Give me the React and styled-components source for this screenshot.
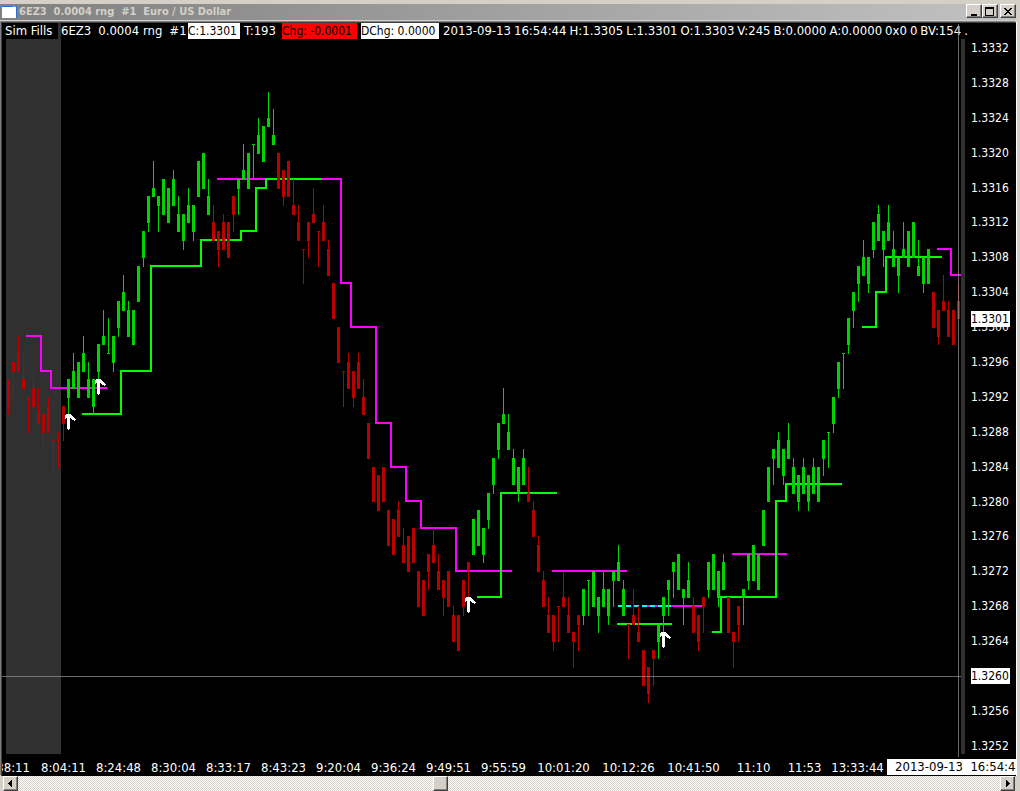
import React from "react";
import styled, { createGlobalStyle } from "styled-components";

const Global = createGlobalStyle`
  *, *::before, *::after { box-sizing: border-box; }
  body {
    margin: 0;
    background: #d4d0c8;
    font-family: "DejaVu Sans Condensed", "DejaVu Sans", Tahoma, sans-serif;
  }
`;

const Window = styled.main`
  display: flex;
  flex-direction: column;
  height: 100vh;
  min-height: 400px;
  padding: 4px 4px 0 0;
  overflow: hidden;
  background: #d4d0c8;
`;

const TitleBar = styled.header`
  flex: none;
  display: flex;
  align-items: center;
  height: 16px;
  padding: 0 0 0 2px;
  background: linear-gradient(90deg, #808080, #c2c2c2);
`;

const WindowIcon = styled.svg`
  width: 15px;
  height: 12px;
  margin-right: 2px;
`;

const Title = styled.h1`
  flex: 1;
  margin: 0;
  color: #d4d0c8;
  font-size: 11px;
  font-weight: 700;
  line-height: 14px;
  white-space: pre;
`;

const BevelButton = styled.button`
  flex: none;
  display: grid;
  place-items: center;
  width: ${(p) => p.$width || 16}px;
  height: 14px;
  margin: 0 0 ${(p) => (p.$title ? 2 : 0)}px ${(p) => p.$gap || 0}px;
  padding: 0;
  border: 1px solid;
  border-color: #fff #404040 #404040 #fff;
  box-shadow: inset -1px -1px 0 #808080;
  background: #d4d0c8;
`;

const ChartFrame = styled.section`
  position: relative;
  flex: 1;
  min-height: 0;
  display: grid;
  grid-template-rows: 16px minmax(0, 1fr) 19px;
  margin: 2px 0 0 1px;
  border: solid #404040;
  border-width: 1px 0 0 1px;
  box-shadow: -1px -1px 0 #808080, 1px 0 0 #fff;
  background: #000;
  overflow: hidden;
`;

const InfoBar = styled.div`
  display: flex;
  color: #fff;
  font-size: 13px;
  line-height: 16px;
  white-space: pre;
  overflow: hidden;
`;

const SimFills = styled.span`
  flex: none;
  width: 59px;
  padding-left: 3px;
  border-right: 3px solid #303030;
`;

const Field = styled.span`
  flex: none;
  width: ${(p) => p.$width}px;
  margin-right: 4px;
`;

const BoxedField = styled(Field)`
  background: ${(p) => p.$bg};
  color: #000;
  font-size: 12px;
`;

const Symbol = styled(Field)`
  display: flex;
  gap: 7px;
`;

const Quote = styled.span`
  display: flex;
  gap: 3px;
`;

const PlotRow = styled.div`
  display: flex;
  min-height: 0;
`;

const Plot = styled.svg`
  display: block;
  flex: 1;
  min-width: 0;
  height: 100%;
`;

const Rail = styled.div`
  flex: none;
  width: 4px;
  margin-bottom: 3px;
  background: #303030;
`;

const PriceAxis = styled.div`
  flex: none;
  position: relative;
  display: flex;
  flex-direction: column;
  justify-content: space-between;
  width: 51px;
  padding: 1px 0 3px 6px;
  color: #fff;
  font-size: 12px;
  line-height: 16px;
`;

const PriceTag = styled.strong`
  position: absolute;
  left: 6px;
  top: ${(p) => p.$at}%;
  width: 39px;
  background: #fff;
  color: #000;
  font-weight: 400;
`;

const TimeAxis = styled.div`
  display: grid;
  grid-template-columns: 34fr repeat(9, 55fr) repeat(3, 65fr) 55fr 47fr 59fr 129fr;
  color: #fff;
  font-size: 13px;
  line-height: 16px;
  white-space: pre;
`;

const TimeLabel = styled.span`
  display: flex;
  justify-content: center;
  min-width: 0;
  padding-top: 3px;
  overflow: hidden;
`;

const FirstTime = styled(TimeLabel)`
  justify-content: flex-end;
  padding-right: 6px;
`;

const CurrentTime = styled(TimeLabel)`
  justify-content: flex-start;
  height: 16px;
  margin-top: 2px;
  padding: 0 0 0 8px;
  background: #fff;
  color: #000;
`;

const CrosshairV = styled.i`
  position: absolute;
  right: 57px;
  top: 1px;
  bottom: 19px;
  width: 1px;
  background: rgba(150, 150, 150, 0.7);
`;

const Scrollbar = styled.div`
  flex: none;
  display: flex;
  height: 15px;
  margin-left: 2px;
  padding-right: 1px;
  border-left: 1px solid #d4d0c8;
`;

const Track = styled.div`
  flex: 1;
  display: flex;
  background: repeating-conic-gradient(#fff 0 25%, #d4d0c8 0 50%) 0 0 / 2px 2px;
`;

const Thumb = styled.div`
  width: 15px;
  height: 15px;
  margin-left: 42.3%;
  border: 1px solid;
  border-color: #fff #404040 #404040 #fff;
  box-shadow: inset -1px -1px 0 #808080;
  background: #d4d0c8;
`;

const ArrowButton = styled(BevelButton)`
  height: 15px;
`;

// Each bar spans four ticks: [high, body top offset, body bottom offset].
const RUNS = [
  ["r", [3294,0,3],[3296,0,1],[3299,2,4],[3297,3,4],[3292,0,0],[3295,2,4],[3293,3,4],[3290,0,2],[3292,1,4],[3287,0,0],[3288,0,0],[3291,0,2]],
  ["g", [3294,0,2],[3297,2,4],[3296,0,4],[3299,2,4],[3296,2,4],[3294,0,3],[3298,0,3],[3302,3,4],[3301,4,4],[3299,0,3],[3303,0,3],[3306,2,4],[3303,1,4],[3302,0,4],[3307,0,4],[3311,0,3],[3315,0,3],[3319,3,4],[3315,0,1],[3317,0,4],[3316,0,4],[3318,1,4],[3315,2,4],[3313,0,3],[3316,2,4],[3314,0,3],[3319,0,4],[3320,0,4],[3317,2,4]],
  ["r", [3314,2,4],[3311,0,2],[3313,1,4],[3312,0,4],[3315,0,2]],
  ["g", [3317,0,1],[3321,3,4],[3320,0,4],[3321,0,0],[3324,2,4],[3323,0,4],[3327,3,4],[3325,3,4]],
  ["r", [3320,0,4],[3318,0,3],[3319,0,4],[3317,3,4],[3314,2,4],[3309,0,0],[3312,0,2],[3316,3,4],[3311,0,0],[3314,2,4],[3310,1,4],[3305,0,4],[3300,0,4],[3295,0,0],[3297,1,4],[3295,0,3],[3297,1,4],[3294,2,4],[3289,0,4],[3284,0,4],[3283,0,4],[3284,0,4],[3279,0,4],[3278,0,4],[3280,1,4],[3277,2,4],[3276,0,4],[3277,0,4],[3272,0,4],[3271,0,4],[3274,0,2],[3277,2,4],[3274,2,4],[3271,0,2],[3272,0,4],[3268,1,4],[3267,0,4],[3271,0,3],[3273,0,1]],
  ["g", [3278,0,4],[3279,0,4],[3277,0,3],[3281,0,3],[3285,0,3],[3289,0,3],[3293,3,4],[3290,2,4],[3286,1,4],[3284,0,3],[3286,1,4]],
  ["r", [3284,3,4],[3280,1,4],[3276,1,4],[3272,1,4],[3269,2,4],[3267,0,3],[3268,0,0],[3272,3,4],[3269,2,4],[3265,0,1],[3267,0,1]],
  ["g", [3270,0,3],[3271,0,0],[3272,0,4],[3269,0,2],[3272,2,4],[3270,0,3],[3272,0,1],[3275,2,4],[3271,1,4]],
  ["r", [3266,0,0],[3270,3,4],[3268,3,4],[3263,0,4],[3261,0,3],[3263,0,1]],
  ["g", [3266,0,2],[3269,0,2],[3271,0,1],[3273,0,1],[3274,0,4],[3270,0,1],[3273,2,4]],
  ["r", [3269,1,4],[3267,0,3],[3269,0,1]],
  ["g", [3273,0,3],[3274,0,4],[3272,0,3],[3274,1,4]],
  ["r", [3269,0,4],[3265,0,1],[3268,0,2]],
  ["g", [3270,0,1],[3274,0,3],[3275,0,4],[3274,0,4],[3279,0,4],[3284,0,4],[3286,0,1],[3288,1,4],[3286,0,3],[3289,2,4],[3285,1,4],[3283,0,3],[3285,1,4],[3283,0,3],[3285,1,4],[3284,0,4],[3287,0,2],[3288,0,0],[3292,0,3],[3296,0,3],[3297,0,0],[3301,0,3],[3304,0,2],[3307,0,2],[3310,2,4],[3308,0,3],[3312,0,3],[3314,1,4],[3311,0,2],[3314,2,4],[3311,2,4],[3308,0,2],[3312,3,4],[3311,0,4],[3312,0,4],[3310,3,4],[3308,0,3],[3309,0,4]],
  ["r", [3304,0,4],[3302,0,3],[3306,3,4],[3303,1,4],[3302,0,4],[3305,2,4]],
];

const BARS = RUNS.flatMap(([tone, ...bars]) => bars.map((b) => [tone, ...b]));

const yOf = (price) => Math.round(48 + (3332 - price) * 8.72);

// Stop levels: start x, then alternating price and the x where that level ends.
const STEPS = [
  ["#ff00ff", 26, 3299, 41, 3295, 51, 3293, 107],
  ["#ff00ff", 217, 3317, 341, 3305, 351, 3300, 376, 3289, 391, 3284, 406, 3280, 421, 3277, 456, 3272, 512],
  ["#00ff00", 82, 3290, 121, 3295, 151, 3307, 201, 3310, 241, 3311, 256, 3316, 266, 3317, 322],
  ["#00ff00", 477, 3269, 501, 3281, 557],
  ["#ff00ff", 552, 3272, 627],
  ["#ff00ff", 647, 3268, 702],
  ["#00ff00", 617, 3266, 672],
  ["#ff00ff", 732, 3274, 787],
  ["#00ff00", 712, 3265, 721, 3269, 776, 3280, 786, 3282, 842],
  ["#00ff00", 862, 3300, 876, 3304, 886, 3308, 942],
  ["#ff00ff", 937, 3309, 951, 3306, 961],
];

const stepPath = ([, start, ...rest]) => {
  let d = `M${start} ${yOf(rest[0])}`;
  for (let i = 0; i < rest.length; i += 2) {
    d += `V${yOf(rest[i])}H${rest[i + 1]}`;
  }
  return d;
};

const FILLS = [[68, 3290], [98, 3294], [468, 3269], [663, 3265]];

const PRICES = Array.from({ length: 21 }, (_, i) => ((13332 - i * 4) / 10000).toFixed(4));

const TIMES = [
  "8:04:11", "8:24:48", "8:30:04", "8:33:17", "8:43:23", "9:20:04", "9:36:24",
  "9:49:51", "9:55:59", "10:01:20", "10:12:26", "10:41:50", "11:10", "11:53", "13:33:44",
];

const QUOTE = [
  "2013-09-13", "16:54:44", "H:1.3305", "L:1.3301", "O:1.3303", "V:245",
  "B:0.0000", "A:0.0000", "0x0", "0", "BV:154", ".",
];

function Candle({ x, tone, high, top, bottom }) {
  const color = tone === "g" ? "#00d400" : "#bb0000";
  const y0 = yOf(high);
  const bodyTop = yOf(high - top);
  return (
    <g fill={color}>
      <rect x={x} y={y0} width="1" height={yOf(high - 4) - y0 + 1} />
      <rect x={x - 1} y={bodyTop} width="3" height={yOf(high - bottom) - bodyTop + 1} />
    </g>
  );
}

function PriceChart() {
  return (
    <Plot viewBox="2 39 959 718" preserveAspectRatio="none" shapeRendering="crispEdges" role="img" aria-label="Euro / US Dollar range bars">
      <rect x="6" y="39" width="55" height="715" fill="#303030" />
      {STEPS.map((s, i) => (
        <path key={i} d={stepPath(s)} fill="none" stroke={s[0]} strokeWidth="2" />
      ))}
      <path d={`M618 ${yOf(3268)}H671`} stroke="#00ffff" strokeWidth="2" strokeDasharray="5 3" />
      {BARS.map(([tone, high, top, bottom], i) => (
        <Candle key={i} x={8 + i * 5} tone={tone} high={high} top={top} bottom={bottom} />
      ))}
      {FILLS.map(([x, price]) => (
        <path
          key={x}
          transform={`translate(${x} ${yOf(price)})`}
          d="M-2 0H3V1H4V2H5V3H6V4H7V5H8V6H7V7H6V6H4V5H3V4H2V15H1V16H0V15H-1V4H-2V5H-3V1H-2Z"
          fill="#fff"
        />
      ))}
      <rect x="2" y="676" width="959" height="1" fill="#969696" fillOpacity="0.7" />
    </Plot>
  );
}

export default function App() {
  return (
    <>
      <Global />
      <Window>
        <TitleBar>
          <WindowIcon viewBox="0 0 15 12" shapeRendering="crispEdges" aria-hidden="true">
            <rect width="15" height="12" fill="#2a6fd0" />
            <rect y="1" width="14" height="11" fill="#fff" />
            <rect x="11" width="2" height="1" fill="#8ec0ff" />
          </WindowIcon>
          <Title>{"6EZ3  0.0004 rng  #1  Euro / US Dollar"}</Title>
          <BevelButton $title aria-label="Minimize">
            <svg width="10" height="9" shapeRendering="crispEdges"><rect x="2" y="7" width="6" height="2" /></svg>
          </BevelButton>
          <BevelButton $title aria-label="Maximize">
            <svg width="10" height="9" shapeRendering="crispEdges"><path d="M0 0H9V9H0ZM1 2V8H8V2Z" fillRule="evenodd" /></svg>
          </BevelButton>
          <BevelButton $title $gap={2} aria-label="Close">
            <svg width="10" height="9" shapeRendering="crispEdges"><path d="M1 1H3V2H4V3H6V2H7V1H9V2H8V3H7V4H6V5H7V6H8V7H9V8H7V7H6V6H4V7H3V8H1V7H2V6H3V5H4V4H3V3H2V2H1Z" /></svg>
          </BevelButton>
        </TitleBar>

        <ChartFrame>
          <InfoBar>
            <SimFills>Sim Fills</SimFills>
            <Symbol $width={123}>
              <span>6EZ3</span>
              <span>0.0004 rng</span>
              <span>#1</span>
            </Symbol>
            <BoxedField $width={52} $bg="#fff">C:1.3301</BoxedField>
            <Field $width={34}>T:193</Field>
            <BoxedField $width={75} $bg="#f00">Chg: -0.0001</BoxedField>
            <BoxedField $width={78} $bg="#fff">DChg: 0.0000</BoxedField>
            <Quote>
              {QUOTE.map((q) => <span key={q}>{q}</span>)}
            </Quote>
          </InfoBar>
          <PlotRow>
            <PriceChart />
            <Rail />
            <PriceAxis>
              {PRICES.map((p) => <span key={p}>{p}</span>)}
              <PriceTag $at={37.9}>1.3301</PriceTag>
              <PriceTag $at={87.6}>1.3260</PriceTag>
            </PriceAxis>
          </PlotRow>
          <TimeAxis>
            <FirstTime>38:11</FirstTime>
            {TIMES.map((t) => <TimeLabel key={t}>{t}</TimeLabel>)}
            <CurrentTime>{"2013-09-13  16:54:44"}</CurrentTime>
          </TimeAxis>
          <CrosshairV />
        </ChartFrame>

        <Scrollbar>
          <ArrowButton $width={15} aria-label="Scroll left">
            <svg width="9" height="9" shapeRendering="crispEdges"><path d="M6 1V8H5V7H4V6H3V5H2V4H3V3H4V2H5V1Z" /></svg>
          </ArrowButton>
          <Track role="scrollbar" aria-controls="root" aria-orientation="horizontal" aria-valuenow={43}>
            <Thumb />
          </Track>
          <ArrowButton $width={15} aria-label="Scroll right">
            <svg width="9" height="9" shapeRendering="crispEdges"><path d="M3 1V8H4V7H5V6H6V5H7V4H6V3H5V2H4V1Z" /></svg>
          </ArrowButton>
        </Scrollbar>
      </Window>
    </>
  );
}
